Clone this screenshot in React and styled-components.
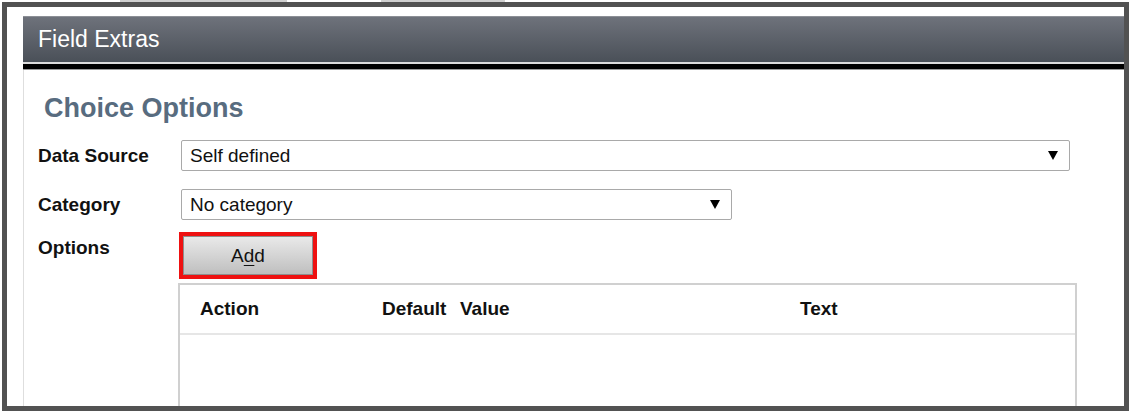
import styled, { createGlobalStyle } from "styled-components";

const GlobalStyle = createGlobalStyle`
  body {
    margin: 0;
    background: #ffffff;
    font-family: "Liberation Sans", Arial, sans-serif;
  }
`;

const TopStrip = styled.div`
  height: 2px;
  display: flex;
`;

const StripTab = styled.div`
  height: 2px;
  width: ${(p) => p.$width}px;
  margin-left: ${(p) => p.$offset}px;
  background: #d0d0d0;
`;

const Frame = styled.div`
  margin-left: 2px;
  width: 1101px;
  height: 390px;
  border: 5px solid #525252;
  overflow: hidden;
  padding: 9px 0px 0px 16px;
  box-sizing: content-box;
  display: flex;
  flex-direction: column;
  background: #ffffff;
`;

const Header = styled.div`
  flex-shrink: 0;
  height: 45px;
  display: flex;
  align-items: center;
  padding-left: 15px;
  border-top: 1px solid #8c8f96;
  background: linear-gradient(#6e727b, #4a5058);
  color: #ffffff;
  font-size: 23px;
`;

const HeaderRule = styled.div`
  flex-shrink: 0;
  height: 5px;
  background: #000000;
  border-top: 2px solid #dcdcdc;
  border-bottom: 1px solid #9a9a9a;
`;

const Content = styled.div`
  flex: 1;
  min-height: 0;
  overflow: hidden;
  border-left: 1px solid #dedede;
  padding: 23px 0px 0px 14px;
`;

const Heading = styled.h2`
  margin: 0px 0px 0px 6px;
  font-size: 27px;
  line-height: 31px;
  font-weight: 700;
  color: #586c7f;
`;

const Row = styled.div`
  display: grid;
  grid-template-columns: 143px 1fr;
  align-items: ${(p) => (p.$top ? "start" : "center")};
  margin-top: ${(p) => p.$gap}px;
`;

const Label = styled.div`
  font-size: 19px;
  font-weight: 700;
  color: #111111;
  padding-top: ${(p) => (p.$top ? "5px" : "0px")};
`;

const Select = styled.div`
  width: ${(p) => p.$width}px;
  height: 29px;
  box-sizing: content-box;
  border: 1px solid #a9a9a9;
  border-radius: 2px;
  display: flex;
  align-items: center;
  justify-content: space-between;
  padding: 0px 11px 0px 8px;
  font-size: 19px;
  color: #111111;
`;

const Arrow = styled.span`
  width: 0px;
  height: 0px;
  border-left: 5px solid transparent;
  border-right: 5px solid transparent;
  border-top: 9px solid #000000;
`;

const Highlight = styled.div`
  margin-left: -2px;
  width: 130px;
  border: 4px solid #ee1111;
`;

const AddButton = styled.button`
  width: 130px;
  height: 39px;
  border: 1px solid #8e8e8e;
  background: linear-gradient(#e9e9e9, #bfbfbf);
  font-family: "Liberation Sans", Arial, sans-serif;
  font-size: 19px;
  color: #111111;
  display: flex;
  align-items: center;
  justify-content: center;
  padding: 0px;

  & u {
    text-decoration-thickness: 1px;
    text-underline-offset: 3px;
  }
`;

const Table = styled.div`
  margin: 4px 0px 0px 140px;
  width: 895px;
  height: 200px;
  border: 2px solid #d0d0d0;
`;

const TableHead = styled.div`
  height: 48px;
  display: grid;
  grid-template-columns: 182px 78px 340px 1fr;
  align-items: center;
  padding-left: 20px;
  border-bottom: 2px solid #e6e6e6;
  font-size: 19px;
  font-weight: 700;
  color: #111111;
`;

const columns = ["Action", "Default", "Value", "Text"];

export default function App() {
  return (
    <>
      <GlobalStyle />
      <TopStrip>
        <StripTab $offset={120} $width={167} />
        <StripTab $offset={94} $width={124} />
      </TopStrip>
      <Frame>
        <Header>Field Extras</Header>
        <HeaderRule />
        <Content>
          <Heading>Choice Options</Heading>

          <Row $gap={16}>
            <Label>Data Source</Label>
            <Select $width={868}>
              Self defined
              <Arrow />
            </Select>
          </Row>

          <Row $gap={18}>
            <Label>Category</Label>
            <Select $width={530}>
              No category
              <Arrow />
            </Select>
          </Row>

          <Row $gap={12} $top>
            <Label $top>Options</Label>
            <Highlight>
              <AddButton>
                A<u>d</u>d
              </AddButton>
            </Highlight>
          </Row>

          <Table>
            <TableHead>
              {columns.map((c) => (
                <span key={c}>{c}</span>
              ))}
            </TableHead>
          </Table>
        </Content>
      </Frame>
    </>
  );
}
